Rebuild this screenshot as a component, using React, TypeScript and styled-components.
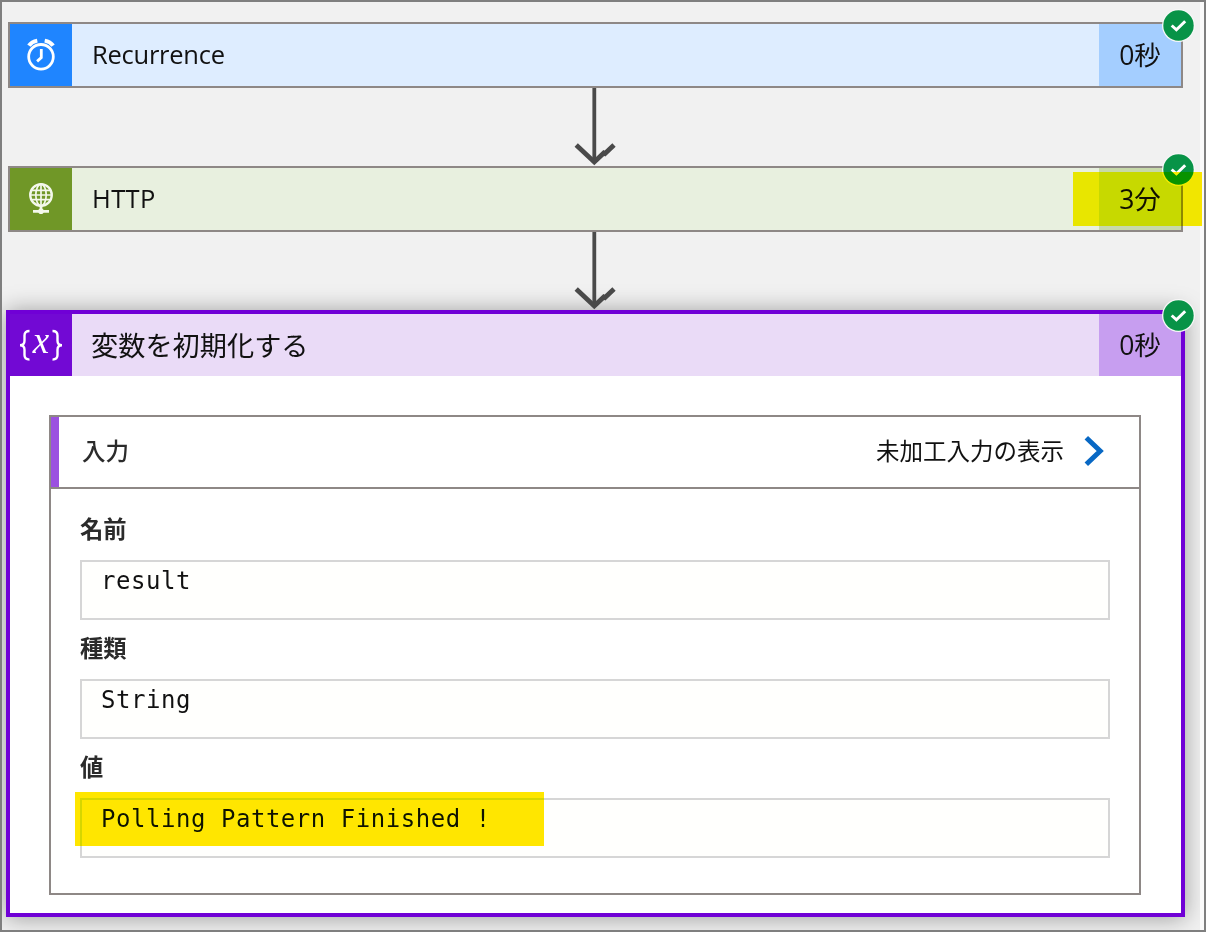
import React from 'react';
import styled, { createGlobalStyle } from 'styled-components';

const GlobalStyle = createGlobalStyle`
  *, *::before, *::after { box-sizing: border-box; }
  body { margin: 0; background: #fff; }
`;

const Frame = styled.main`
  display: flex;
  width: 1206px;
  height: 932px;
  border: 2px solid #7f7f7f;
  background: #f1f1f1;
  overflow: hidden;
  font-family: 'Open Sans', 'Noto Sans CJK JP', sans-serif;
  color: #111;
`;

const Canvas = styled.div`
  display: flex;
  flex-direction: column;
  width: 1198px;
  padding: 20px 0 0 6px;
`;

const Gutter = styled.div`
  position: relative;
  width: 4px;
  background: #fafafa;
`;

const Card = styled.section`
  position: relative;
  display: flex;
  flex: none;
  width: 1175px;
  height: 66px;
  border: 2px solid #8e8886;
`;

const ActiveCard = styled.section`
  position: relative;
  flex: none;
  width: 1179px;
  height: 607px;
  margin-left: -2px;
  border: 4px solid #7000d6;
  background: #fff;
  box-shadow: 0 1px 22px rgba(0, 0, 0, 0.36);
`;

const CardHeader = styled.header`
  display: flex;
  height: 62px;
`;

const IconTile = styled.div<{ $color: string }>`
  flex: none;
  width: 62px;
  height: 62px;
  background: ${(p) => p.$color};
  svg { display: block; }
`;

const Title = styled.h2<{ $color: string; $spacing?: number }>`
  flex: 1;
  margin: 0;
  padding-left: 20px;
  background: ${(p) => p.$color};
  font-size: 25.5px;
  font-weight: 400;
  line-height: 60px;
  height: 62px;
  letter-spacing: ${(p) => p.$spacing ?? 0}px;
  white-space: nowrap;
`;

const JaTitle = styled(Title)`
  padding-left: 19px;
  font-size: 27.2px;
  line-height: 60px;
  font-family: 'Noto Sans CJK JP', sans-serif;
`;

const Duration = styled.div<{ $color: string }>`
  flex: none;
  width: 82px;
  height: 62px;
  background: ${(p) => p.$color};
  font-size: 26.5px;
  line-height: 62px;
  text-align: center;
  white-space: nowrap;
`;

const BadgeRoot = styled.svg<{ $top: number; $right: number }>`
  position: absolute;
  top: ${(p) => p.$top}px;
  right: ${(p) => p.$right}px;
`;

const Marker = styled.div<{ $x: number; $y: number; $w: number; $h: number }>`
  position: absolute;
  z-index: 3;
  left: ${(p) => p.$x}px;
  top: ${(p) => p.$y}px;
  width: ${(p) => p.$w}px;
  height: ${(p) => p.$h}px;
  background: #ffe600;
  mix-blend-mode: darken;
`;

const Connector = styled.svg`
  display: block;
  flex: none;
  position: relative;
  z-index: 1;
  margin-left: 562px;
`;

const Panel = styled.div`
  width: 1092px;
  height: 480px;
  margin: 39px 0 0 39px;
  border: 2px solid #8e8886;
`;

const PanelHeader = styled.div`
  display: flex;
  align-items: center;
  height: 72px;
  padding: 0 35px 2px 24px;
  border-bottom: 2px solid #8e8886;
  box-shadow: inset 8px 0 0 #9b51e0;
  font-size: 23.5px;
  line-height: 34px;
  font-family: 'Noto Sans CJK JP', sans-serif;
`;

const PanelTitle = styled.span`
  flex: 1;
  padding: 0 0 2px 7px;
  font-weight: 500;
  color: #2b2b2b;
`;

const RawLink = styled.span`
  display: flex;
  align-items: center;
  gap: 20px;
`;

const RawText = styled.span`
  padding-bottom: 2px;
`;

const Fields = styled.div`
  padding: 22px 29px 0;
`;

const Field = styled.div`
  position: relative;
  height: 119px;
`;

const Label = styled.div`
  height: 49px;
  font-family: 'Noto Sans CJK JP', sans-serif;
  font-size: 23.3px;
  font-weight: 600;
  line-height: 35px;
  color: #2b2b2b;
`;

const Value = styled.div`
  height: 60px;
  padding-left: 19px;
  border: 2px solid #d6d6d6;
  background: #fffffd;
  font-family: 'DejaVu Sans Mono', monospace;
  font-size: 24px;
  letter-spacing: 0.54px;
  line-height: 39px;
  white-space: pre;
`;

const StatusBadge = ({ top, right }: { top: number; right: number }) => (
  <BadgeRoot $top={top} $right={right} width="33" height="33" viewBox="0 0 33 33">
    <circle cx="16.5" cy="16.5" r="16.5" fill="#f7f7f7" />
    <circle cx="16.5" cy="16.5" r="15.2" fill="#089347" />
    <path d="M9.7 16.5 14.4 20.8 23.2 12.2" fill="none" stroke="#fff" strokeWidth="3" />
  </BadgeRoot>
);

const Arrow = ({ height }: { height: number }) => (
  <Connector width="50" height={height} viewBox={`0 0 50 ${height}`}>
    <g fill="none" stroke="#4a4a4a">
      <path d={`M24.3 0V${height - 4}`} strokeWidth="3.8" />
      <path
        d={`M6.2 ${height - 21} 24.3 ${height - 4} 33.8 ${height - 13} 35 ${height - 12.4} 44 ${height - 21}`}
        strokeWidth="4.8"
      />
    </g>
  </Connector>
);

const ClockIcon = () => (
  <svg width="62" height="62" viewBox="0 0 62 62" fill="none" stroke="#fff">
    <circle cx="31" cy="32.8" r="12.3" strokeWidth="2.8" />
    <path d="M31.3 25v8.6l-4.2 3.8" strokeWidth="2.8" />
    <path d="M18.9 21.6q2.8-4 8.4-5" strokeWidth="4" />
    <path d="M34.7 16.6q5.6 1 8.4 5" strokeWidth="4" />
  </svg>
);

const GlobeIcon = () => (
  <svg width="62" height="62" viewBox="0 0 62 62" fill="none" stroke="#f4f8ec">
    <circle cx="31" cy="27" r="10.8" strokeWidth="2.3" />
    <ellipse cx="31" cy="27" rx="5.2" ry="10.8" strokeWidth="1.7" />
    <path d="M31 16v22M20 27h22M22 22.3h18M22 31.7h18" strokeWidth="1.7" />
    <path d="M31 38v5M23 43.4h16" strokeWidth="2.8" />
    <circle cx="31" cy="43.2" r="2.8" fill="#f4f8ec" stroke="none" />
  </svg>
);

const VariableIcon = () => (
  <svg width="62" height="62" viewBox="0 0 62 62">
    <g fill="none" stroke="#fff" strokeWidth="2.4">
      <path d="M19.5 17q-5 0-5 4.5v5.3q0 4.5-4.5 4.5q4.5 0 4.5 4.5v5.3q0 4.5 5 4.5" />
      <path d="M42.5 17q5 0 5 4.5v5.3q0 4.5 4.5 4.5q-4.5 0-4.5 4.5v5.3q0 4.5-5 4.5" />
    </g>
    <text
      x="31"
      y="39.2"
      fill="#fff"
      fontFamily="'Liberation Serif', serif"
      fontStyle="italic"
      fontSize="37"
      textAnchor="middle"
    >
      x
    </text>
  </svg>
);

const Chevron = () => (
  <svg width="20" height="32" viewBox="0 0 20 32">
    <path d="M2.3 2.7 16.2 16 2.3 29.3" fill="none" stroke="#0868c4" strokeWidth="5" />
  </svg>
);

export default function App() {
  return (
    <>
      <GlobalStyle />
      <Frame>
        <Canvas>
          <Card>
            <IconTile $color="#1f85ff"><ClockIcon /></IconTile>
            <Title $color="#deedff" $spacing={-0.25}>Recurrence</Title>
            <Duration $color="#a4ceff">0秒</Duration>
            <StatusBadge top={-15} right={-14} />
          </Card>
          <Arrow height={78} />
          <Card>
            <IconTile $color="#709727"><GlobeIcon /></IconTile>
            <Title $color="#e8f0df" $spacing={0.35}>HTTP</Title>
            <Duration $color="#c7d9a9">3分</Duration>
            <StatusBadge top={-15} right={-14} />
            <Marker $x={1063} $y={4} $w={129} $h={54} />
          </Card>
          <Arrow height={78} />
          <ActiveCard>
            <CardHeader>
              <IconTile $color="#7209d4"><VariableIcon /></IconTile>
              <JaTitle $color="#eadbf7">変数を初期化する</JaTitle>
              <Duration $color="#c79ef0">0秒</Duration>
            </CardHeader>
            <StatusBadge top={-15} right={-14} />
            <Panel>
              <PanelHeader>
                <PanelTitle>入力</PanelTitle>
                <RawLink>
                  <RawText>未加工入力の表示</RawText>
                  <Chevron />
                </RawLink>
              </PanelHeader>
              <Fields>
                <Field>
                  <Label>名前</Label>
                  <Value>result</Value>
                </Field>
                <Field>
                  <Label>種類</Label>
                  <Value>String</Value>
                </Field>
                <Field>
                  <Label>値</Label>
                  <Value>Polling Pattern Finished !</Value>
                  <Marker $x={-5} $y={43} $w={469} $h={54} />
                </Field>
              </Fields>
            </Panel>
          </ActiveCard>
        </Canvas>
        <Gutter />
      </Frame>
    </>
  );
}
